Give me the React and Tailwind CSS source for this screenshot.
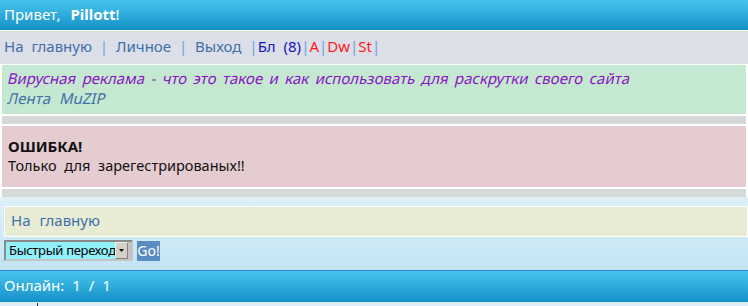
import React from 'react'

function Sep() {
  return <span className="text-[#6aa6de]">|</span>
}

export default function App() {
  return (
    <div className="w-[748px] h-[306px] overflow-hidden bg-white text-[15px] leading-none font-['Noto_Sans',sans-serif] [word-spacing:5px] whitespace-nowrap">
      {/* top bar */}
      <div className="h-[30px] flex items-center px-[4px] pb-px text-white bg-gradient-to-b from-[#46c4ee] to-[#0f92c8]">
        <span>Привет,</span>
        <b className="ml-[10px]">Pillott</b>!
      </div>

      {/* nav */}
      <div className="mt-px h-[33px] flex items-center px-[4px] pb-[3px] bg-[#dcdee8] text-[#4070a8] [word-spacing:4px]">
        <span>На главную <Sep /> Личное <Sep /> Выход <Sep /></span>
        <span className="text-[#1616c0]">Бл (8)</span>
        <Sep />
        <span className="text-[#ff1a1a]">A</span>
        <Sep />
        <span className="text-[#ff1a1a]">Dw</span>
        <Sep />
        <span className="text-[#ff1a1a]">St</span>
        <Sep />
      </div>

      <div className="mt-px mx-[2px] h-[49px] bg-[#c5e8d1] px-[6px] pt-[6px] flex flex-col items-start gap-[5px]">
        <span className="inline-block -skew-x-[13deg] text-[#8a14c6] [word-spacing:2.5px]">Вирусная реклама - что это такое и как использовать для раскрутки своего сайта</span>
        <span className="inline-block -skew-x-[13deg] text-[#4070a8]">Лента MuZIP</span>
      </div>

      <div className="mt-[2px] mx-[2px] h-[8px] bg-[#d5d9d7]" />

      <div className="mt-[2px] mx-[2px] h-[61px] bg-[#e5ccd1] px-[6px] pt-[11px] flex flex-col leading-[19px] text-[#111] [word-spacing:4px]">
        <b>ОШИБКА!</b>
        <span className="text-[14.5px]">Только для зарегестрированых!!</span>
      </div>

      <div className="mt-[2px] mx-[2px] h-[8px] bg-[#d5d9d7]" />

      {/* light area */}
      <div className="h-[73px] bg-gradient-to-b from-[#dff0f9] to-[#c2e4f3] pt-[9px]">
        <div className="ml-[4px] h-[31px] border border-white bg-[#e8ecd5] flex items-center px-[6px] pb-[2px] text-[#4070a8]">
          На главную
        </div>
        <div className="mt-[3px] ml-[4px] flex items-center gap-[4px]">
          <div className="w-[129px] h-[21px] border-2 border-t-[#8a8a8a] border-l-[#8a8a8a] border-r-[#c4c4c4] border-b-[#c4c4c4] bg-[#c4c4c4] flex items-stretch text-[13px] tracking-[-0.3px] text-black">
            <span className="w-[109px] bg-[#92f0fa] flex items-center pl-[3px] [word-spacing:0]">Быстрый переход</span>
            <span className="w-[13px] bg-[#d4d0c8] border border-t-[#f0f0f0] border-l-[#f0f0f0] border-r-[#808080] border-b-[#808080] flex items-center justify-center">
              <svg width="5" height="3" viewBox="0 0 5 3"><path d="M0 0h5L2.5 3z" fill="#111" /></svg>
            </span>
          </div>
          <div className="w-[23px] h-[20px] bg-[#5a8cc2] text-white text-[14px] flex items-center justify-center [word-spacing:0]">Go!</div>
        </div>
      </div>

      {/* footer */}
      <div className="h-[1px] bg-[#2c80d6]" />
      <div className="h-[31px] flex items-center px-[4px] pb-[3px] text-white bg-gradient-to-b from-[#46c4ee] to-[#0f92c8] [word-spacing:4px]">
        Онлайн: 1 / 1
      </div>
      <div className="h-[4px] bg-[#dcedf8] relative">
        <span className="absolute left-[37px] top-[1px] w-px h-[3px] bg-[#333]" />
      </div>
    </div>
  )
}
